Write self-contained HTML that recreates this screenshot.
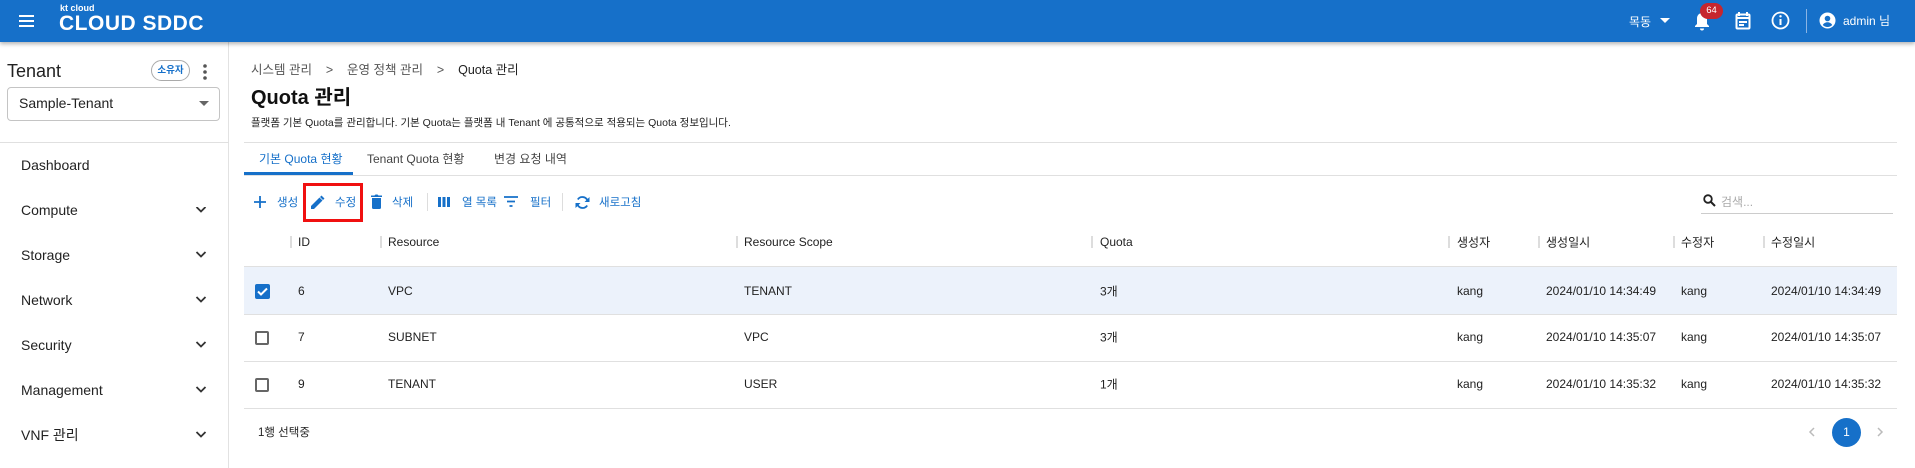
<!DOCTYPE html>
<html><head><meta charset="utf-8"><style>
*{margin:0;padding:0;box-sizing:border-box}
body{width:1915px;height:468px;overflow:hidden;background:#fff;font-family:"Liberation Sans","Noto Sans CJK KR",sans-serif;color:#222;position:relative}
.a{position:absolute;white-space:nowrap}
.hdr{left:0;top:0;width:1915px;height:42px;background:#1670c9;box-shadow:0 2px 4px rgba(0,0,0,.3);z-index:2}
.w{color:#fff}
.side{left:0;top:42px;width:229px;height:426px;border-right:1px solid #e2e2e2}
.menu{font-size:14px;color:#222;transform:translateY(-50%)}
.chev{left:195px}
.tb{font-size:11.5px;color:#1670c9;transform:translateY(-50%)}
.th{font-size:12px;color:#222;transform:translateY(-50%)}
.sep{width:2px;height:12px;background:#ddd;top:236px}
.td{font-size:12px;color:#222;transform:translateY(-50%)}
.hl{height:1px;background:#e0e0e0;left:244px;width:1653px}
.cb{width:14px;height:14px;border:2px solid #666;border-radius:2px;left:255px}
</style></head><body>
<div class="a hdr">
  <svg class="a" style="left:17px;top:13px" width="20" height="16" viewBox="0 0 20 16"><path d="M2 3h15M2 8h15M2 13h15" stroke="#fff" stroke-width="2"/></svg>
  <div class="a w" style="left:60px;top:3px;font-size:9px;font-weight:bold">kt cloud</div>
  <div class="a w" style="left:59px;top:12px;font-size:21px;font-weight:bold;letter-spacing:0.5px">CLOUD SDDC</div>
  <div class="a w" style="left:1629px;top:13px;font-size:12px">목동</div>
  <svg class="a" style="left:1660px;top:18px" width="10" height="6"><path d="M0 0h10L5 5z" fill="#fff"/></svg>
  <svg class="a" style="left:1694px;top:12px" width="16" height="19" viewBox="0 0 16 19"><path d="M8 1c-3 0-5 2.5-5 5.5V12L1 14v1h14v-1l-2-2V6.5C13 3.5 11 1 8 1zM6 16.5a2 2 0 004 0z" fill="#fff"/></svg>
  <div class="a" style="left:1700px;top:3px;width:23px;height:16px;border-radius:8px;background:#c6262e;color:#fff;font-size:9.5px;text-align:center;line-height:16px">64</div>
  <svg class="a" style="left:1735px;top:11px" width="16" height="19" viewBox="0 0 16 19"><rect x="1.5" y="3.5" width="13" height="14" rx="1" fill="none" stroke="#fff" stroke-width="2"/><path d="M4 1v4M12 1v4M1 7h14M4 11h8M4 14h5" stroke="#fff" stroke-width="2"/></svg>
  <svg class="a" style="left:1771px;top:11px" width="19" height="19" viewBox="0 0 19 19"><circle cx="9.5" cy="9.5" r="8" fill="none" stroke="#fff" stroke-width="1.8"/><path d="M9.5 8v6" stroke="#fff" stroke-width="2"/><circle cx="9.5" cy="5.3" r="1.2" fill="#fff"/></svg>
  <div class="a" style="left:1806px;top:9px;width:1px;height:24px;background:#8ab4e4"></div>
  <svg class="a" style="left:1819px;top:12px" width="17" height="17" viewBox="0 0 17 17"><circle cx="8.5" cy="8.5" r="8" fill="#fff"/><circle cx="8.5" cy="6.5" r="2.8" fill="#1670c9"/><path d="M3.8 13c1.2-2 3-2.7 4.7-2.7s3.5.7 4.7 2.7c-1.3 1.4-2.9 2-4.7 2s-3.4-.6-4.7-2z" fill="#1670c9"/></svg>
  <div class="a w" style="left:1843px;top:12px;font-size:12px">admin 님</div>
</div>
<div class="a side"></div>
<div class="a" style="left:7px;top:61px;font-size:18px;color:#222">Tenant</div>
<div class="a" style="left:151px;top:60px;width:39px;height:21px;border:1px solid #aaa;border-radius:11px;font-size:9.5px;font-weight:bold;color:#1670c9;text-align:center;line-height:19px">소유자</div>
<svg class="a" style="left:202px;top:63px" width="6" height="18"><circle cx="3" cy="3" r="1.8" fill="#555"/><circle cx="3" cy="9" r="1.8" fill="#555"/><circle cx="3" cy="15" r="1.8" fill="#555"/></svg>
<div class="a" style="left:7px;top:87px;width:213px;height:34px;border:1px solid #c4c4c4;border-radius:4px"></div>
<div class="a" style="left:19px;top:95px;font-size:14px">Sample-Tenant</div>
<svg class="a" style="left:199px;top:101px" width="10" height="5"><path d="M0 0h10L5 5z" fill="#666"/></svg>
<div class="a" style="left:0;top:142px;width:229px;height:1px;background:#e0e0e0"></div>
<div class="a menu" style="left:21px;top:165px">Dashboard</div>
<div class="a menu" style="left:21px;top:210px">Compute</div>
<div class="a menu" style="left:21px;top:255px">Storage</div>
<div class="a menu" style="left:21px;top:300px">Network</div>
<div class="a menu" style="left:21px;top:345px">Security</div>
<div class="a menu" style="left:21px;top:390px">Management</div>
<div class="a menu" style="left:21px;top:435px">VNF 관리</div>
<svg class="a" style="left:195px;top:207px" width="12" height="232"><g fill="none" stroke="#333" stroke-width="1.8"><path d="M1.5 0l4.5 4.5L10.5 0"/><path d="M1.5 45l4.5 4.5L10.5 45"/><path d="M1.5 90l4.5 4.5L10.5 90"/><path d="M1.5 135l4.5 4.5L10.5 135"/><path d="M1.5 180l4.5 4.5L10.5 180"/><path d="M1.5 225l4.5 4.5L10.5 225"/></g></svg>

<div class="a" style="left:251px;top:59px;font-size:12.5px;color:#555">시스템 관리&nbsp;&nbsp;&nbsp;&nbsp;&gt;&nbsp;&nbsp;&nbsp;&nbsp;운영 정책 관리&nbsp;&nbsp;&nbsp;&nbsp;&gt;&nbsp;&nbsp;&nbsp;&nbsp;<span style="color:#222">Quota 관리</span></div>
<div class="a" style="left:251px;top:81px;font-size:20px;font-weight:bold;color:#111">Quota 관리</div>
<div class="a" style="left:251px;top:115px;font-size:10.5px;color:#222">플랫폼 기본 Quota를 관리합니다. 기본 Quota는 플랫폼 내 Tenant 에 공통적으로 적용되는 Quota 정보입니다.</div>
<div class="a hl" style="top:142px"></div>
<div class="a" style="left:259px;top:150px;font-size:12px;color:#1670c9">기본 Quota 현황</div>
<div class="a" style="left:367px;top:150px;font-size:12px;color:#444">Tenant Quota 현황</div>
<div class="a" style="left:494px;top:150px;font-size:12px;color:#444">변경 요청 내역</div>
<div class="a hl" style="top:175px"></div>
<div class="a" style="left:244px;top:172px;width:109px;height:3px;background:#1670c9"></div>

<svg class="a" style="left:254px;top:196px" width="12" height="12"><path d="M6 0v12M0 6h12" stroke="#1670c9" stroke-width="1.8"/></svg>
<div class="a tb" style="left:277px;top:202px">생성</div>
<div class="a" style="left:303px;top:183px;width:60px;height:39px;border:3px solid #f01010"></div>
<svg class="a" style="left:311px;top:195px" width="14" height="14" viewBox="0 0 14 14"><path d="M0 11v3h3l8.5-8.5-3-3zM13.5 3.5l-3-3L9 2l3 3z" fill="#1670c9"/></svg>
<div class="a tb" style="left:335px;top:202px">수정</div>
<svg class="a" style="left:371px;top:194px" width="11" height="15" viewBox="0 0 11 15"><path d="M1 4h9v9.5a1.5 1.5 0 01-1.5 1.5h-6A1.5 1.5 0 011 13.5zM0 1.5h3.5l1-1h2l1 1H11V3H0z" fill="#1670c9"/></svg>
<div class="a tb" style="left:392px;top:202px">삭제</div>
<div class="a" style="left:427px;top:193px;width:1px;height:18px;background:#ddd"></div>
<svg class="a" style="left:438px;top:197px" width="12" height="10"><path d="M0 0h3v10H0zM4.5 0h3v10h-3zM9 0h3v10H9z" fill="#1670c9"/></svg>
<div class="a tb" style="left:462px;top:202px">열 목록</div>
<svg class="a" style="left:504px;top:196px" width="14" height="11"><path d="M0 1h14M3 5.5h8M5.5 10h3" stroke="#1670c9" stroke-width="1.8"/></svg>
<div class="a tb" style="left:530px;top:202px">필터</div>
<div class="a" style="left:562px;top:193px;width:1px;height:18px;background:#ddd"></div>
<svg class="a" style="left:575px;top:195px" width="15" height="15" viewBox="0 0 15 15"><path d="M12.5 5.5A5.5 5.5 0 002.8 4.5M2.5 9.5a5.5 5.5 0 009.7 1" fill="none" stroke="#1670c9" stroke-width="1.8"/><path d="M14.5 2v5h-5zM0.5 13V8h5z" fill="#1670c9"/></svg>
<div class="a tb" style="left:599px;top:202px">새로고침</div>

<svg class="a" style="left:1703px;top:194px" width="13" height="13"><circle cx="5" cy="5" r="3.8" fill="none" stroke="#222" stroke-width="1.8"/><path d="M8 8l4 4" stroke="#222" stroke-width="2"/></svg>
<div class="a" style="left:1721px;top:193px;font-size:12px;color:#aaa">검색...</div>
<div class="a" style="left:1701px;top:213px;width:192px;height:1px;background:#ccc"></div>

<div class="a sep" style="left:290px"></div><div class="a th" style="left:298px;top:242px">ID</div>
<div class="a sep" style="left:380px"></div><div class="a th" style="left:388px;top:242px">Resource</div>
<div class="a sep" style="left:736px"></div><div class="a th" style="left:744px;top:242px">Resource Scope</div>
<div class="a sep" style="left:1091px"></div><div class="a th" style="left:1100px;top:242px">Quota</div>
<div class="a sep" style="left:1448px"></div><div class="a th" style="left:1457px;top:242px">생성자</div>
<div class="a sep" style="left:1538px"></div><div class="a th" style="left:1546px;top:242px">생성일시</div>
<div class="a sep" style="left:1673px"></div><div class="a th" style="left:1681px;top:242px">수정자</div>
<div class="a sep" style="left:1763px"></div><div class="a th" style="left:1771px;top:242px">수정일시</div>

<div class="a" style="left:244px;top:267px;width:1653px;height:47px;background:#ecf2fb"></div>
<div class="a hl" style="top:266px"></div>
<div class="a hl" style="top:314px"></div>
<div class="a hl" style="top:361px"></div>
<div class="a hl" style="top:408px"></div>

<div class="a" style="left:255px;top:284px;width:15px;height:15px;background:#1670c9;border-radius:2px"></div>
<svg class="a" style="left:256px;top:285px" width="13" height="13"><path d="M2 6.5l3 3 6-6" fill="none" stroke="#fff" stroke-width="2"/></svg>
<div class="a td" style="left:298px;top:291px">6</div><div class="a td" style="left:388px;top:291px">VPC</div><div class="a td" style="left:744px;top:291px">TENANT</div><div class="a td" style="left:1100px;top:291px">3개</div><div class="a td" style="left:1457px;top:291px">kang</div><div class="a td" style="left:1546px;top:291px">2024/01/10 14:34:49</div><div class="a td" style="left:1681px;top:291px">kang</div><div class="a td" style="left:1771px;top:291px">2024/01/10 14:34:49</div>

<div class="a cb" style="top:331px"></div>
<div class="a td" style="left:298px;top:337px">7</div><div class="a td" style="left:388px;top:337px">SUBNET</div><div class="a td" style="left:744px;top:337px">VPC</div><div class="a td" style="left:1100px;top:337px">3개</div><div class="a td" style="left:1457px;top:337px">kang</div><div class="a td" style="left:1546px;top:337px">2024/01/10 14:35:07</div><div class="a td" style="left:1681px;top:337px">kang</div><div class="a td" style="left:1771px;top:337px">2024/01/10 14:35:07</div>

<div class="a cb" style="top:378px"></div>
<div class="a td" style="left:298px;top:384px">9</div><div class="a td" style="left:388px;top:384px">TENANT</div><div class="a td" style="left:744px;top:384px">USER</div><div class="a td" style="left:1100px;top:384px">1개</div><div class="a td" style="left:1457px;top:384px">kang</div><div class="a td" style="left:1546px;top:384px">2024/01/10 14:35:32</div><div class="a td" style="left:1681px;top:384px">kang</div><div class="a td" style="left:1771px;top:384px">2024/01/10 14:35:32</div>

<div class="a td" style="left:258px;top:432px;font-size:11.5px">1행 선택중</div>
<svg class="a" style="left:1808px;top:427px" width="7" height="10"><path d="M6 1L2 5l4 4" fill="none" stroke="#bbb" stroke-width="1.5"/></svg>
<div class="a" style="left:1832px;top:418px;width:29px;height:29px;border-radius:50%;background:#1670c9;color:#fff;font-size:12px;text-align:center;line-height:29px">1</div>
<svg class="a" style="left:1877px;top:427px" width="7" height="10"><path d="M1 1l4 4-4 4" fill="none" stroke="#bbb" stroke-width="1.5"/></svg>
</body></html>
